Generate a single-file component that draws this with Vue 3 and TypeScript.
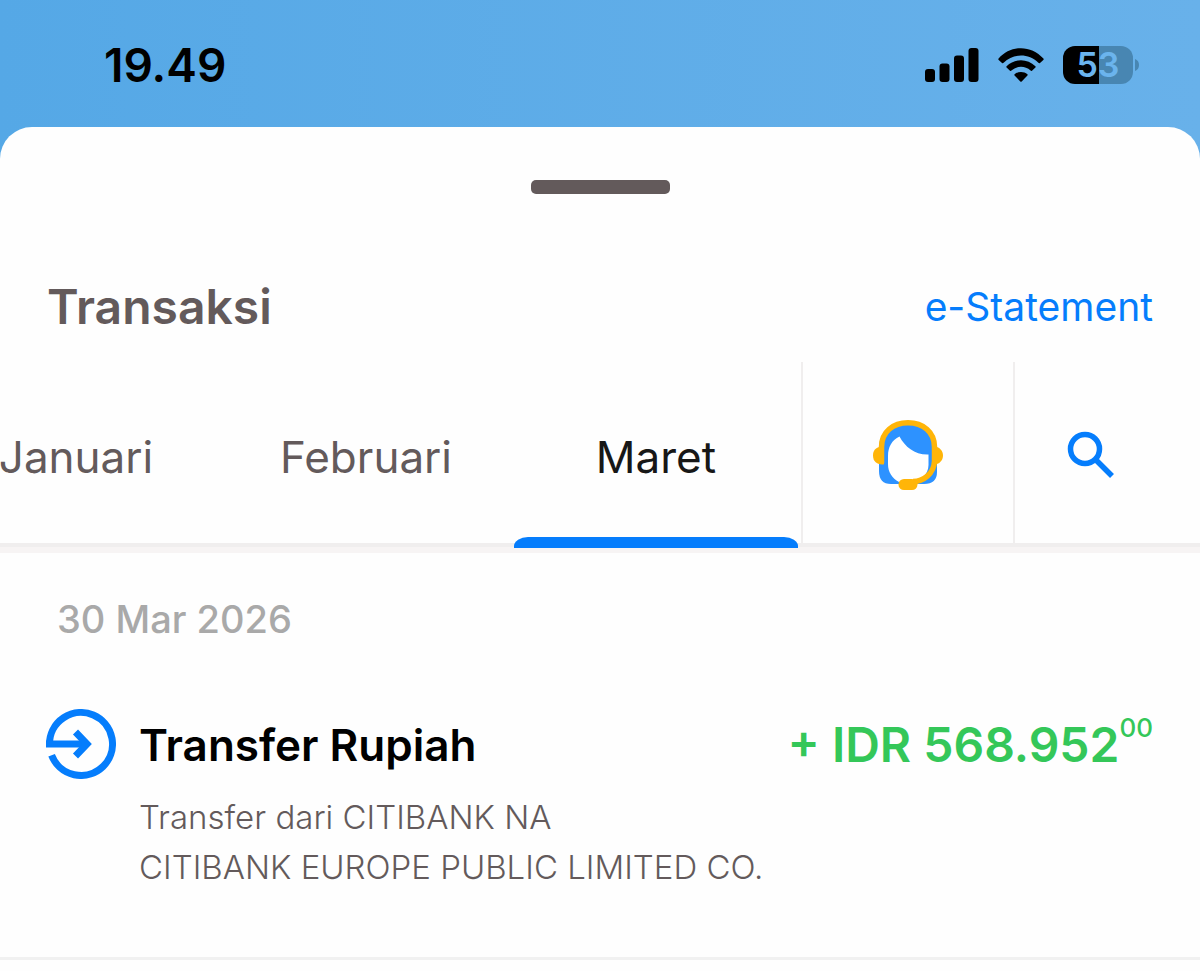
<script setup lang="ts">
import { ref } from 'vue'

interface Transaction {
  title: string
  details: string[]
  amount: string
  cents: string
}

const months: string[] = ['Januari', 'Februari', 'Maret']
const active = ref<string>('Maret')
const date = '30 Mar 2026'
const transactions: Transaction[] = [
  {
    title: 'Transfer Rupiah',
    details: ['Transfer dari CITIBANK NA', 'CITIBANK EUROPE PUBLIC LIMITED CO.'],
    amount: '+ IDR 568.952',
    cents: '00',
  },
]
</script>

<template>
  <div class="screen">
    <header class="status">
      <time class="clock">19.49</time>
      <div class="indicators">
        <svg class="signal" width="54" height="34" viewBox="0 0 54 34" aria-hidden="true">
          <rect x="0" y="21" width="10" height="13" rx="3" />
          <rect x="14.5" y="15.5" width="10" height="18.500" rx="3" />
          <rect x="29" y="7.500" width="10" height="26.500" rx="3" />
          <rect x="43.500" y="0" width="10" height="34" rx="3" />
        </svg>
        <svg class="wifi" width="46" height="34" viewBox="0 0 46 34" aria-hidden="true">
          <path d="M.6 10.500C13-3.300 33-3.300 45.400 10.500Q46 11.300 45.300 12L42 15Q41.200 15.600 40.400 14.800C30.500 5.200 15.500 5.200 5.600 14.800Q4.800 15.600 4 15L.7 12Q0 11.300.6 10.500Z" />
          <path d="M8.600 18.200C16.500 10.200 29.500 10.200 37.400 18.200Q38 18.900 37.400 19.600L34 22.700Q33.300 23.200 32.600 22.600C27 17.600 19 17.600 13.400 22.600Q12.700 23.200 12 22.700L8.600 19.600Q8 18.900 8.600 18.200Z" />
          <path d="M16.600 26.200C20 23.200 26 23.200 29.400 26.200Q30 26.900 29.400 27.600L23.700 33.400Q23 34 22.300 33.400L16.600 27.600Q16 26.900 16.600 26.200Z" />
        </svg>
        <div class="battery">
          <span class="level">53</span>
          <svg width="5" height="12" viewBox="0 0 5 12" aria-hidden="true"><path d="M0 0Q4 1.500 4 6T0 12Z" /></svg>
        </div>
      </div>
    </header>

    <main class="sheet">
      <div class="handle"></div>

      <div class="heading">
        <h1>Transaksi</h1>
        <a href="#statement">e-Statement</a>
      </div>

      <div class="toolbar">
        <nav class="months">
          <button
            v-for="month in months"
            :key="month"
            type="button"
            class="month"
            :class="{ active: month === active }"
            @click="active = month"
          >
            {{ month }}
          </button>
        </nav>
        <button type="button" class="tool" aria-label="Bantuan">
          <svg width="70" height="70" viewBox="0 0 70 70" aria-hidden="true">
            <path fill="#2d92ff" d="M6 44V28C6 13 18 4 35 4S62 13 62 28L64 42V52Q64 64 51 64H18Q6 64 6 51Z" />
            <path fill="#fff" d="M26.500 16.500C32 27 42 35 55.500 34.500V45C55.500 55 47 61 39 62H26C19 58 15 52 15 44V36C15 27 19 20 26.500 16.500Z" />
            <path fill="none" stroke="#ffb508" stroke-width="5.500" d="M8.500 43V27C8.500 12 20 2.800 35 2.800S61.500 12 61.500 27V41C61 54 50 61.500 40 61.500" />
            <path fill="#ffb508" d="M11 26.500V44Q11 44.500 9 44.500C3.500 44.500 0 41 0 35.500S3 28 6 27Z" />
            <path fill="#ffb508" d="M59 26.500L64 27C67 28 70 31 70 35.500S67 43 64 44L59 44.500Z" />
            <rect x="25.500" y="59" width="19" height="11" rx="5.500" fill="#ffb508" />
          </svg>
        </button>
        <button type="button" class="tool search" aria-label="Cari">
          <svg width="48" height="48" viewBox="0 0 48 48" aria-hidden="true">
            <g fill="none" stroke="#057dfc" stroke-width="5.500">
              <circle cx="18" cy="18" r="14.500" />
              <path d="M28 28L45 45" />
            </g>
          </svg>
        </button>
      </div>

      <section class="day">
        <h2>{{ date }}</h2>
        <article v-for="item in transactions" :key="item.title" class="entry">
          <svg class="incoming" width="70" height="70" viewBox="0 0 70 70" aria-hidden="true">
            <g fill="none" stroke="#057dfc" stroke-width="7">
              <path d="M3.500 35A31.500 31.500 0 1 1 5.600 46.300" />
              <path d="M0 35H41" />
              <path d="M29.500 23L41 35L29.500 47" />
            </g>
          </svg>
          <div class="info">
            <h3>{{ item.title }}</h3>
            <p v-for="line in item.details" :key="line">{{ line }}</p>
          </div>
          <div class="amount">{{ item.amount }}<sup>{{ item.cents }}</sup></div>
        </article>
      </section>
    </main>
  </div>
</template>

<style>
body {
  margin: 0;
  background: #fefefe;
}
</style>

<style scoped>
.screen {
  min-height: 100vh;
  overflow: hidden;
  font-family: Inter, "Liberation Sans", sans-serif;
  background: linear-gradient(90deg, #55a8e6, #68b1ea) top / 100% 180px no-repeat;
}

.status {
  display: flex;
  justify-content: space-between;
  align-items: center;
  box-sizing: border-box;
  height: 127px;
  padding: 3px 60px 0 104px;
}

.clock {
  font-size: 46px;
  font-weight: 600;
  line-height: 56px;
}

.indicators {
  display: flex;
  align-items: center;
}

.wifi {
  margin-left: 19px;
}

.battery {
  display: flex;
  align-items: center;
  gap: 2px;
  margin-left: 19px;
}

.level {
  width: 70px;
  border-radius: 12px;
  background: linear-gradient(90deg, #000 52%, #4886b2 52%);
  color: #6bb4ed;
  font-size: 34px;
  font-weight: 600;
  line-height: 38px;
  text-align: center;
}

.battery svg {
  fill: #4886b2;
}

.sheet {
  padding-top: 53px;
  border-radius: 32px 32px 0 0;
  background: #fefefe;
}

.handle {
  width: 139px;
  height: 14px;
  margin: 0 auto;
  border-radius: 5px;
  background: #635a5b;
}

.heading {
  display: flex;
  justify-content: space-between;
  align-items: center;
  box-sizing: border-box;
  height: 168px;
  padding: 56px 47px 0;
}

h1,
h2,
h3,
p {
  margin: 0;
}

h1 {
  color: #635a5b;
  font-size: 48px;
  font-weight: 600;
}

.heading a {
  color: #057dfc;
  font-size: 39px;
  font-weight: 400;
  text-decoration: none;
}

.toolbar {
  display: grid;
  grid-template-columns: minmax(0, 1fr) 212px 187px;
  height: 181px;
  border-bottom: 4px solid #f0eeee;
  box-shadow: 0 6px #f7f4f4;
}

.months {
  display: flex;
  justify-content: flex-end;
}

button {
  padding: 0;
  border: 0;
  background: none;
  font-family: inherit;
}

.month {
  position: relative;
  flex: 0 0 290px;
  padding-top: 8px;
  color: #635a5b;
  font-size: 44px;
  font-weight: 400;
}

.month.active {
  color: #171717;
}

.month.active::after {
  content: "";
  position: absolute;
  right: 3px;
  bottom: -5px;
  left: 3px;
  height: 11px;
  border-radius: 14px 14px 0 0 / 9px 9px 0 0;
  background: #057dfc;
}

.tool {
  display: flex;
  justify-content: center;
  align-items: center;
  padding-top: 4px;
  border-left: 2px solid #f0eeee;
}

.search {
  padding-right: 34px;
}

.day {
  padding-top: 44px;
}

h2 {
  padding-left: 57px;
  color: #a9a9a9;
  font-size: 38px;
  font-weight: 500;
  line-height: 56px;
}

.entry {
  display: flex;
  align-items: flex-start;
  padding: 62px 47px 65px 46px;
  border-bottom: 3px solid #f1f1f1;
}

.incoming {
  flex: none;
}

.info {
  flex: 1;
  min-width: 0;
  padding-left: 23px;
}

h3 {
  height: 83px;
  color: #000;
  font-size: 44px;
  font-weight: 600;
  line-height: 72px;
  white-space: nowrap;
}

p {
  color: #635a5b;
  font-size: 33px;
  font-weight: 300;
  line-height: 50px;
  white-space: nowrap;
}

.amount {
  display: flex;
  flex: none;
  color: #34c759;
  font-size: 48px;
  font-weight: 600;
  line-height: 72px;
}

sup {
  font-size: 26px;
  font-weight: 500;
  line-height: 38px;
  vertical-align: baseline;
}
</style>
